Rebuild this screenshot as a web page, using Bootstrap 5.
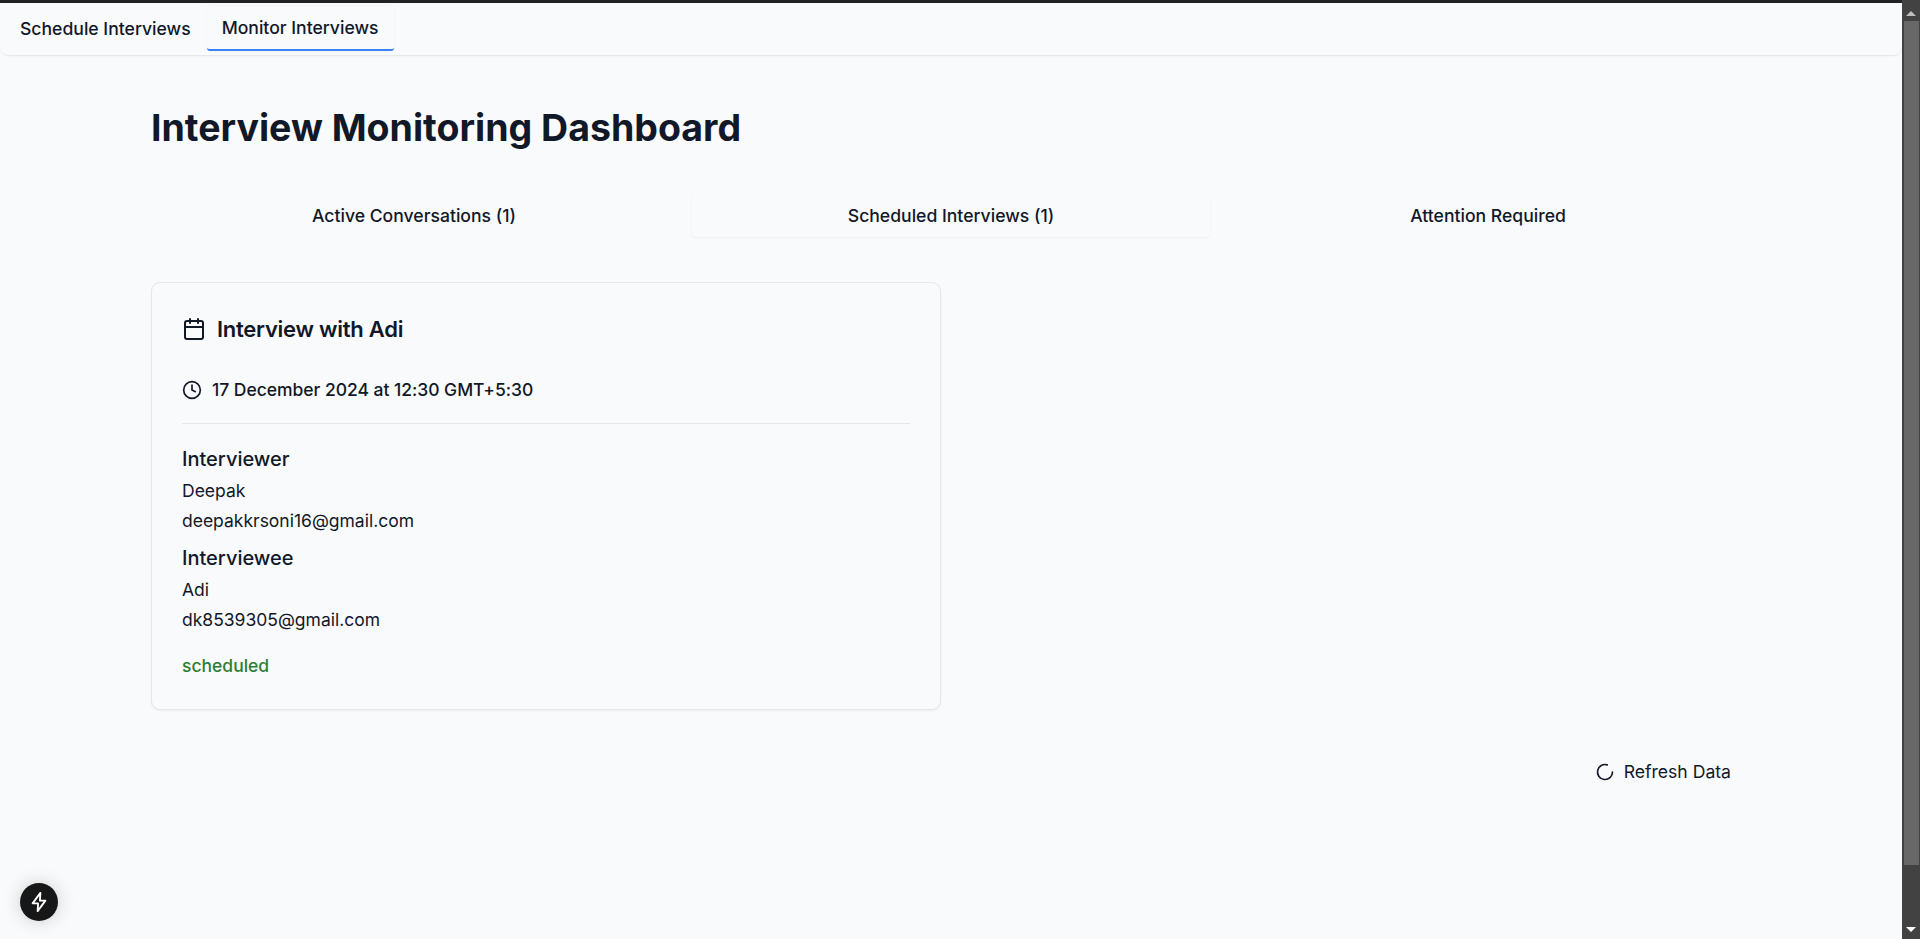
<!DOCTYPE html>
<html lang="en">
<head>
  <meta charset="UTF-8" />
  <meta name="viewport" content="width=device-width, initial-scale=1" />
  <title>Interview Monitoring Dashboard</title>
  <link href="https://cdn.jsdelivr.net/npm/bootstrap@5.3.0/dist/css/bootstrap.min.css" rel="stylesheet" />
  <style>
    html, body { height: 100%; overflow: hidden; }
    body { font-family: Inter, "Liberation Sans", sans-serif; background: #f9fafc; color: #111827; font-size: 17.5px; }
    .page-shell { height: 939px; }
    .page-main { flex: 1 1 auto; min-width: 0; border-top: 3px solid #222; position: relative; overflow: hidden; }

    .top-tabs { height: 53px; padding: 4px 8px 0; border-bottom: 1px solid #e6e8eb; border-radius: 0 0 9px 9px; gap: 4px; box-shadow: 0 1px 2px rgba(0,0,0,.03); }
    .top-tab { font-size: 17.6px; font-weight: 500; color: #111827; padding: 10px 12px; border: 0; background: none; height: 44px; line-height: 24px; }
    .top-tab.is-current { border-bottom: 2px solid #3b82f6; border-radius: 3px; padding: 9px 15px 9px; box-shadow: 0 0 3px rgba(0,0,0,.04); }

    .board { width: 1600px; margin: 0 auto; padding-top: 52px; }
    .board-title { font-size: 37.5px; font-weight: 700; line-height: 40px; margin: 0 0 46px; color: #111827; }

    .section-tabs { display: grid; grid-template-columns: repeat(3, 518px); column-gap: 19px; padding: 0 4px; margin-bottom: 44px; }
    .section-tab { height: 43px; border: 0; background: none; font-size: 17.6px; font-weight: 500; color: #111827; border-radius: 4px; padding: 1px 0 0; margin-bottom: 1px; }
    .section-tab.is-current { box-shadow: 0 1px 3px rgba(0,0,0,.05); }

    .card-row { --bs-gutter-x: 20px; }
    .iv-card { background: #f9fafc; border: 1px solid #e5e7eb; border-radius: 9px; padding: 32px 30px 30px; height: 428px; box-shadow: 0 1px 2px rgba(0,0,0,.05); }
    .iv-head { gap: 11px; }
    .iv-title { font-size: 22px; font-weight: 600; line-height: 28px; margin: 0; letter-spacing: -.25px; }
    .iv-when { font-weight: 500; line-height: 24px; margin-top: 35px; padding-bottom: 21px; border-bottom: 1px solid #e5e7eb; gap: 10px; letter-spacing: -.03px; }
    .iv-first { margin-top: 17px; }
    .iv-label { font-size: 20px; font-weight: 500; line-height: 28px; margin: 0 0 3px; }
    .iv-line { line-height: 30px; margin: 0; }
    .iv-second { margin-top: 8px; }
    .iv-status { color: #2e7d32; font-weight: 500; line-height: 24px; margin-top: 19px; }
    .icon-ink { stroke: currentColor; fill: none; stroke-linecap: round; stroke-linejoin: round; stroke-width: 2; flex: none; }

    .refresh-btn { border: 0; background: none; color: #111827; font-size: 17.6px; font-weight: 400; padding: 0; line-height: 24px; gap: 9px; }
    .refresh-row { padding-top: 50px; padding-right: 20px; }

    .dev-badge { position: absolute; left: 20px; bottom: 18px; width: 38px; height: 38px; border-radius: 50%; background: #171717; box-shadow: 0 0 18px rgba(0,0,0,.18); }

    .fake-scroll { width: 18px; flex: none; background: #424242; }
    .scroll-up { width: 0; height: 0; border-left: 5px solid transparent; border-right: 5px solid transparent; border-bottom: 5px solid #bdbdbd; margin: 11px auto 5px; }
    .scroll-thumb { height: 844px; background: #686868; margin: 0 1px 0 2px; }
    .scroll-down { width: 0; height: 0; border-left: 5px solid transparent; border-right: 5px solid transparent; border-top: 5px solid #fff; margin: auto auto 7px; }
  </style>
</head>
<body>
  <div class="page-shell d-flex">
    <div class="page-main">
      <nav class="top-tabs d-flex align-items-start">
        <button class="top-tab">Schedule Interviews</button>
        <button class="top-tab is-current">Monitor Interviews</button>
      </nav>

      <main class="board">
        <h1 class="board-title">Interview Monitoring Dashboard</h1>

        <div class="section-tabs">
          <button class="section-tab">Active Conversations (1)</button>
          <button class="section-tab is-current">Scheduled Interviews (1)</button>
          <button class="section-tab">Attention Required</button>
        </div>

        <div class="row card-row">
          <div class="col-6">
            <div class="iv-card">
              <div class="iv-head d-flex align-items-center">
                <svg class="icon-ink" width="24" height="24" viewBox="0 0 24 24"><path d="M8 2v4"/><path d="M16 2v4"/><rect width="18" height="18" x="3" y="4" rx="2"/><path d="M3 10h18"/></svg>
                <h3 class="iv-title">Interview with Adi</h3>
              </div>
              <div class="iv-when d-flex align-items-center">
                <svg class="icon-ink" width="20" height="20" viewBox="0 0 24 24"><circle cx="12" cy="12" r="10"/><path d="M12 6v6l4 2"/></svg>
                <span>17 December 2024 at 12:30 GMT+5:30</span>
              </div>
              <div class="iv-first">
                <h4 class="iv-label pt-1">Interviewer</h4>
                <p class="iv-line">Deepak</p>
                <p class="iv-line">deepakkrsoni16@gmail.com</p>
              </div>
              <div class="iv-second">
                <h4 class="iv-label">Interviewee</h4>
                <p class="iv-line">Adi</p>
                <p class="iv-line">dk8539305@gmail.com</p>
              </div>
              <div class="iv-status">scheduled</div>
            </div>
          </div>
        </div>

        <div class="refresh-row d-flex justify-content-end">
          <button class="refresh-btn d-flex align-items-center">
            <svg class="icon-ink" width="20" height="20" viewBox="0 0 24 24"><path d="M21 12a9 9 0 1 1-6.219-8.56"/></svg>
            Refresh Data
          </button>
        </div>
      </main>

      <div class="dev-badge d-flex align-items-center justify-content-center">
        <svg width="22" height="22" viewBox="0 0 24 24" fill="none" stroke="#fff" stroke-width="2" stroke-linejoin="round"><path d="M13.5 2 5 13.5h6L10.5 22 19 10.5h-6z"/></svg>
      </div>
    </div>

    <div class="fake-scroll d-flex flex-column">
      <div class="scroll-up"></div>
      <div class="scroll-thumb"></div>
      <div class="scroll-down"></div>
    </div>
  </div>
  <script src="https://cdn.jsdelivr.net/npm/bootstrap@5.3.0/dist/js/bootstrap.bundle.min.js"></script>
</body>
</html>
